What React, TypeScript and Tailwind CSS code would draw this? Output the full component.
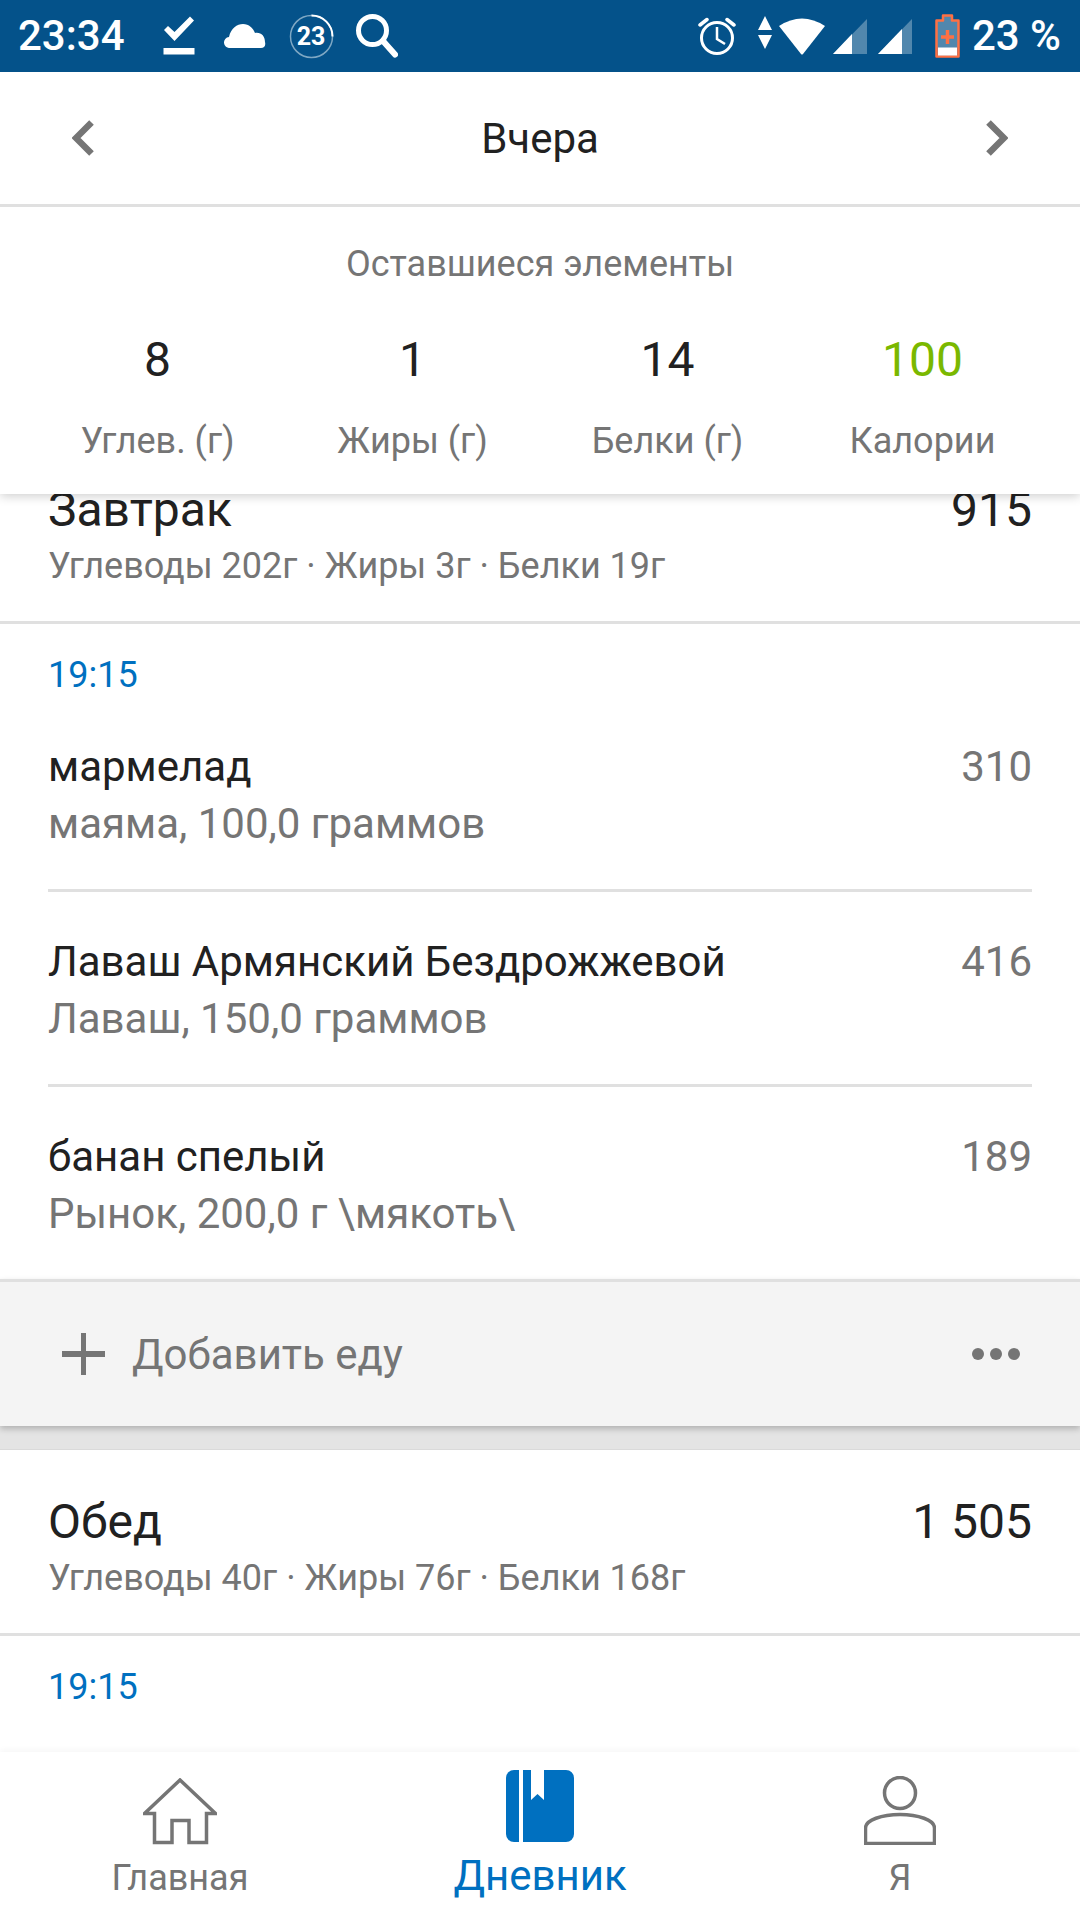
import React from "react";

const foods = [
  { name: "мармелад", detail: "маяма, 100,0 граммов", cal: "310" },
  { name: "Лаваш Армянский Бездрожжевой", detail: "Лаваш, 150,0 граммов", cal: "416" },
  { name: "банан спелый", detail: "Рынок, 200,0 г \\мякоть\\", cal: "189" },
];

const summary = [
  { value: "8", label: "Углев. (г)", color: "text-[#212121]" },
  { value: "1", label: "Жиры (г)", color: "text-[#212121]" },
  { value: "14", label: "Белки (г)", color: "text-[#212121]" },
  { value: "100", label: "Калории", color: "text-[#7ab800]" },
];

// Status bar: left side icons
const StatusLeft = () => (
  <div className="flex items-center">
    <span className="text-[42px] leading-none font-medium text-white ml-[18px]">23:34</span>
    <svg width="32" height="40" viewBox="0 0 32 40" className="ml-[38px]" fill="white">
      <path d="M1 14 L5 10 L11.500 16 L27 0.500 L31 4.500 L11.500 25 Z" />
      <rect x="0.500" y="32" width="31" height="6.500" />
    </svg>
    <svg width="42" height="24" viewBox="0 0 42 24" className="ml-[29px]" fill="white">
      <path d="M6 24 a5.500 5.500 0 0 1 -1 -11 C7 4 13 0 19 0 C25 0 29 4 31 9 C37 8 41 12 41 18 C42 22 40 24 37 24 Z" />
    </svg>
    <div className="relative ml-[23px] w-[45px] h-[45px] flex items-center justify-center">
      <svg width="45" height="45" viewBox="0 0 45 45" className="absolute inset-0" fill="none">
        <circle cx="22.500" cy="22.500" r="21" stroke="#7fa8c4" strokeWidth="1.500" />
        <path d="M22.500 1.500 A21 21 0 0 1 43.500 22.500" stroke="white" strokeWidth="2" />
      </svg>
      <span className="text-[25px] leading-none font-bold text-white">23</span>
    </div>
    <svg width="42" height="44" viewBox="0 0 42 44" className="ml-[22px]" fill="none" stroke="white">
      <circle cx="16.500" cy="16.500" r="14" strokeWidth="5" />
      <path d="M27 27 L39 40.500" strokeWidth="6" strokeLinecap="round" />
    </svg>
  </div>
);

// Status bar: right side icons
const StatusRight = () => (
  <div className="flex items-center">
    <svg width="38" height="40" viewBox="0 0 38 40" fill="none" stroke="white">
      <circle cx="19" cy="22" r="15.500" strokeWidth="3" />
      <path d="M19 11 V23 L27 28" strokeWidth="2.500" />
      <path d="M2 9 L9 3.500 M36 9 L29 3.500" strokeWidth="3.500" strokeLinecap="round" />
    </svg>
    <svg width="14" height="34" viewBox="0 0 14 34" className="ml-[22px] -mt-[6px]" fill="white">
      <path d="M7 0 L14 14 H0 Z M0 19 H14 L7 33 Z" />
    </svg>
    <svg width="46" height="38" viewBox="0 0 46 38" className="ml-[7px] -mt-[1px]" fill="white">
      <path d="M0 9 Q23 -6 46 9 L24 37 Q23 38 22 37 Z" />
    </svg>
    <svg width="34" height="35" viewBox="0 0 34 35" className="ml-[8px]">
      <path d="M0 35 L34 0 V35 Z" fill="#5187ad" />
      <path d="M0 35 L19 15 V35 Z" fill="white" />
    </svg>
    <svg width="34" height="35" viewBox="0 0 34 35" className="ml-[11px]">
      <path d="M0 35 L34 0 V35 Z" fill="#5187ad" />
      <path d="M0 35 L24 10 V35 Z" fill="white" />
    </svg>
    <svg width="25" height="44" viewBox="0 0 25 44" className="ml-[23px]">
      <path d="M8 1.500 H17 V6.500 H23.500 V42.500 H1.500 V6.500 H8 Z" fill="#5187ad" stroke="#ff7043" strokeWidth="2.500" strokeLinejoin="round" />
      <rect x="3" y="33.500" width="19" height="8" fill="white" />
      <path d="M12.500 16 V30 M6 23 H19" stroke="#ff7043" strokeWidth="3.500" />
    </svg>
    <span className="text-[42px] leading-none font-medium text-white ml-[12px] mr-[19px]">23 %</span>
  </div>
);

const Chevron = ({ right }: { right?: boolean }) => (
  <svg width="22" height="36" viewBox="0 0 22 36" fill="none" stroke="#757575" strokeWidth="6.500">
    <path d={right ? "M2.500 2.500 L18 18 L2.500 33.500" : "M19.500 2.500 L4 18 L19.500 33.500"} />
  </svg>
);

const SectionHeader = ({ title, macros, cal }: { title: string; macros: string; cal: string }) => (
  <div className="h-[186px] pt-[44px] px-[48px] border-b-[3px] border-[#e0e0e0]">
    <div className="flex justify-between text-[48px] leading-[56px] text-[#212121]">
      <span>{title}</span>
      <span>{cal}</span>
    </div>
    <div className="text-[36px] leading-[42px] mt-[7px] text-[#757575]">{macros}</div>
  </div>
);

const Time = () => (
  <div className="h-[73px] pl-[48px] pt-[30px] text-[36px] leading-[42px] text-[#0070c0]">19:15</div>
);

const FoodRow = ({ name, detail, cal, last }: { name: string; detail: string; cal: string; last?: boolean }) => (
  <div className={`mx-[48px] pt-[45px] ${last ? "h-[192px]" : "h-[195px] border-b-[3px] border-[#e0e0e0]"}`}>
    <div className="flex justify-between text-[42px] leading-[50px]">
      <span className="text-[#212121]">{name}</span>
      <span className="text-[#757575]">{cal}</span>
    </div>
    <div className="text-[42px] leading-[50px] mt-[7px] text-[#757575]">{detail}</div>
  </div>
);

export default function App() {
  return (
    <div className="w-[1080px] h-[1920px] flex flex-col bg-white font-['Roboto',sans-serif] overflow-hidden">
      {/* Top block stays above the scrolled list */}
      <div className="relative z-10 bg-white shadow-[0_2px_10px_rgba(0,0,0,0.2)]">
        <div className="h-[72px] bg-[#04528a] flex items-center justify-between">
          <StatusLeft />
          <StatusRight />
        </div>
        <div className="h-[135px] border-b-[3px] border-[#e0e0e0] flex items-center justify-between px-[72px]">
          <Chevron />
          <span className="mt-[2px] text-[42px] leading-none text-[#212121]">Вчера</span>
          <Chevron right />
        </div>
        <div className="h-[287px] pt-[37px] px-[30px]">
          <div className="text-center text-[36px] leading-[40px] text-[#757575]">Оставшиеся элементы</div>
          <div className="grid grid-cols-4 mt-[48px]">
            {summary.map((s) => (
              <div key={s.label} className="flex flex-col items-center">
                <span className={`text-[48px] leading-[56px] ${s.color}`}>{s.value}</span>
                <span className="text-[36px] leading-[40px] mt-[33px] text-[#757575]">{s.label}</span>
              </div>
            ))}
          </div>
        </div>
      </div>

      {/* Scrolled diary list, first header is cut by the top block */}
      <div className="flex-1 overflow-hidden">
        <div className="-mt-[56px]">
          <SectionHeader title="Завтрак" macros="Углеводы 202г · Жиры 3г · Белки 19г" cal="915" />
          <Time />
          {foods.map((f, i) => (
            <FoodRow key={f.name} {...f} last={i === foods.length - 1} />
          ))}
          <div className="h-[147px] bg-[#f4f4f4] border-t-[3px] border-[#e0e0e0] shadow-[0_3px_6px_rgba(0,0,0,0.22)] flex items-center justify-between pl-[62px] pr-[60px] relative">
            <div className="flex items-center">
              <svg width="43" height="42" viewBox="0 0 43 42" fill="#757575">
                <rect x="19" y="0" width="5" height="42" />
                <rect x="0" y="18" width="43" height="6" />
              </svg>
              <span className="ml-[27px] mt-[2px] text-[42px] leading-none text-[#757575]">Добавить еду</span>
            </div>
            <div className="flex gap-[6px]">
              <span className="w-[12px] h-[12px] rounded-full bg-[#757575]" />
              <span className="w-[12px] h-[12px] rounded-full bg-[#757575]" />
              <span className="w-[12px] h-[12px] rounded-full bg-[#757575]" />
            </div>
          </div>
          <div className="h-[24px] bg-[#e4e4e4] border-b border-[#dadada]" />
          <SectionHeader title="Обед" macros="Углеводы 40г · Жиры 76г · Белки 168г" cal="1 505" />
          <Time />
        </div>
      </div>

      {/* Bottom navigation */}
      <div className="relative h-[168px] bg-white grid grid-cols-3 shadow-[0_-2px_6px_rgba(0,0,0,0.04)]">
        <div className="flex flex-col items-center pt-[26px]">
          <svg width="74" height="67" viewBox="0 0 74 67" fill="none" stroke="#757575" strokeWidth="3.500">
            <path d="M37 2 L1.500 35.500 H11.500 V64.500 H29 V42.500 H46 V64.500 H63.500 V35.500 H72.500 Z" />
          </svg>
          <span className="mt-[14px] text-[36px] leading-[38px] text-[#757575]">Главная</span>
        </div>
        <div className="flex flex-col items-center pt-[18px]">
          <svg width="68" height="72" viewBox="0 0 68 72">
            <rect width="68" height="72" rx="8" fill="#0070c0" />
            <rect x="13" y="0" width="4" height="72" fill="white" />
            <path d="M25 0 H38 V30 L31.500 24 L25 30 Z" fill="white" />
          </svg>
          <span className="mt-[11px] text-[42px] leading-[46px] text-[#0070c0]">Дневник</span>
        </div>
        <div className="flex flex-col items-center pt-[24px]">
          <svg width="72" height="69" viewBox="0 0 72 69" fill="none" stroke="#757575" strokeWidth="3.500">
            <circle cx="36" cy="17" r="15.500" />
            <path d="M1.500 67.500 V52 C1.500 44 18 38.500 36 38.500 S70.500 44 70.500 52 V67.500 Z" />
          </svg>
          <span className="mt-[14px] text-[36px] leading-[38px] text-[#757575]">Я</span>
        </div>
      </div>
    </div>
  );
}
